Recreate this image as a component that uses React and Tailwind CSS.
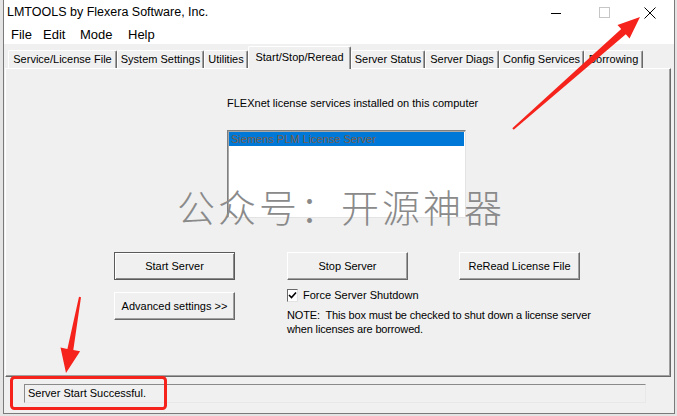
import React from 'react';

// tab strip of the LMTOOLS dialog, widths read off the screenshot
const tabs = [
  { label: 'Service/License File', w: 'w-[109px]' },
  { label: 'System Settings', w: 'w-[87px]' },
  { label: 'Utilities', w: 'w-[44px]' },
  { label: 'Start/Stop/Reread', w: 'w-[103px]', active: true },
  { label: 'Server Status', w: 'w-[74px]' },
  { label: 'Server Diags', w: 'w-[74px]' },
  { label: 'Config Services', w: 'w-[85px]' },
  { label: 'Borrowing', w: 'w-[59px]' },
];

const Btn = ({ children, isDefault }) => (
  <button
    className={
      'w-[121px] h-[28px] bg-[#f0f0f0] text-[11px] text-black flex items-center justify-center ' +
      (isDefault
        ? 'border border-[#5a5a5a] shadow-[inset_1px_1px_0_#ffffff,inset_-1px_-1px_0_#8a8a8a]'
        : 'border border-t-white border-l-white border-r-[#696969] border-b-[#696969] shadow-[inset_-1px_-1px_0_#a0a0a0]')
    }
  >
    {children}
  </button>
);

const App = () => {
  return (
    <div className="relative w-[677px] h-[416px] overflow-hidden bg-[#e4e4e4] font-['Liberation_Sans',Arial,sans-serif] text-black">
      {/* window */}
      <div className="ml-[3px] w-[672px] h-[414px] flex flex-col bg-[#f0f0f0] border-x border-b border-[#7a7a7a]">
        {/* title bar */}
        <div className="h-[25px] bg-white flex items-center">
          <span className="pl-[3px] text-[12.5px] leading-none">LMTOOLS by Flexera Software, Inc.</span>
          <div className="ml-auto flex items-center h-full">
            <div className="w-[50px] flex justify-center">
              <svg width="11" height="11" viewBox="0 0 11 11"><line x1="0" y1="6.5" x2="10" y2="6.5" stroke="#000" strokeWidth="1" /></svg>
            </div>
            <div className="w-[46px] flex justify-center">
              <svg width="11" height="11" viewBox="0 0 11 11"><rect x="0.5" y="0.5" width="10" height="10" fill="none" stroke="#c6c6c6" strokeWidth="1" /></svg>
            </div>
            <div className="w-[46px] mr-[1px] flex justify-center">
              <svg width="12" height="12" viewBox="0 0 12 12"><path d="M0.5 0.5 L11.5 11.5 M11.5 0.5 L0.5 11.5" stroke="#000" strokeWidth="1" fill="none" /></svg>
            </div>
          </div>
        </div>

        {/* menu bar */}
        <div className="h-[19px] bg-white flex items-center text-[13px] leading-none pl-[7px]">
          <span className="w-[32px]">File</span>
          <span className="w-[37px]">Edit</span>
          <span className="w-[48px]">Mode</span>
          <span>Help</span>
        </div>

        {/* tabs */}
        <div className="h-[24px] flex items-end pl-[4px] text-[11px]">
          {tabs.map(t => (
            <div
              key={t.label}
              className={
                t.w +
                ' flex items-center justify-center whitespace-nowrap rounded-t-[2px] border-t border-l border-white border-r border-r-[#696969] shadow-[inset_-1px_0_0_#a0a0a0] ' +
                (t.active ? 'h-[23px] -mb-[1px] relative z-10 bg-[#f0f0f0] pb-[2px]' : 'h-[18px] bg-[#f0f0f0]')
              }
            >
              {t.label}
            </div>
          ))}
        </div>

        {/* tab panel */}
        <div className="ml-[1px] w-[666px] h-[309px] border-t border-l border-white border-r border-b border-r-[#696969] border-b-[#696969] shadow-[inset_-1px_-1px_0_#a0a0a0] text-[11px]">
          <div className="ml-[221px] mt-[28px] flex flex-col">
            <p className="leading-[13px] whitespace-nowrap">FLEXnet license services installed on this computer</p>
            <div className="mt-[20px] w-[239px] h-[88px] bg-white border border-t-[#7f7f7f] border-l-[#7f7f7f] border-r-[#e3e3e3] border-b-[#e3e3e3] shadow-[inset_1px_1px_0_#a8a8a8] p-[1px]">
              <div className="h-[14px] bg-[#0078d7] text-[#7a5e48] leading-[14px] pl-[2px] whitespace-nowrap">
                Siemens PLM License Server
              </div>
            </div>
          </div>

          <div className="mt-[34px] ml-[108px] flex">
            <div className="flex flex-col">
              <Btn isDefault>Start Server</Btn>
              <div className="mt-[12px]">
                <Btn>Advanced settings &gt;&gt;</Btn>
              </div>
            </div>

            <div className="ml-[52px] w-[121px] flex flex-col">
              <Btn>Stop Server</Btn>
              <label className="mt-[9px] flex items-center h-[13px] whitespace-nowrap">
                <span className="w-[13px] h-[13px] bg-white border border-t-[#696969] border-l-[#696969] border-r-[#e3e3e3] border-b-[#e3e3e3] flex items-center justify-center">
                  <svg width="9" height="9" viewBox="0 0 9 9">
                    <path d="M1 4 L3.5 6.5 L8 1.5" stroke="#000" strokeWidth="1.6" fill="none" />
                  </svg>
                </span>
                <span className="ml-[5px]">Force Server Shutdown</span>
              </label>
              <p className="mt-[6px] leading-[14px] whitespace-nowrap tracking-[-0.15px]">
                NOTE:&nbsp; This box must be checked to shut down a license server
                <br />
                when licenses are borrowed.
              </p>
            </div>

            <div className="ml-[51px]">
              <Btn>ReRead License File</Btn>
            </div>
          </div>
        </div>

        {/* status bar */}
        <div className="mt-[7px] ml-[20px] w-[622px] h-[19px] border border-t-[#8a8a8a] border-l-[#8a8a8a] border-r-[#e8e8e8] border-b-[#e8e8e8] flex items-center pl-[3px] text-[11px] whitespace-nowrap">
          Server Start Successful.
        </div>
      </div>

      {/* watermark over the dialog */}
      <div className="absolute left-[177px] top-[184px] text-[38px] leading-[44px] tracking-[3px] text-[#8a8a8a] font-['Noto_Sans_CJK_SC','Noto_Sans',sans-serif] font-light whitespace-nowrap">
        公众号：开源神器
      </div>

      {/* red annotations */}
      <svg className="absolute inset-0 pointer-events-none" width="677" height="416" viewBox="0 0 677 416">
        <rect x="11.5" y="377.5" width="154" height="31" rx="3" fill="none" stroke="#f5231b" strokeWidth="3" />
        <polygon
          points="79,296.8 81,297.2 73.3,349.9 80.1,351.2 66,373 60.5,347.6 67.4,348.9"
          fill="#f5231b"
        />
        <polygon
          points="512.3,128.2 513.7,129.8 625.8,34.2 629.5,38.4 640,17 617.5,24.9 621.2,29"
          fill="#f5231b"
        />
      </svg>
    </div>
  );
};

export default App;
